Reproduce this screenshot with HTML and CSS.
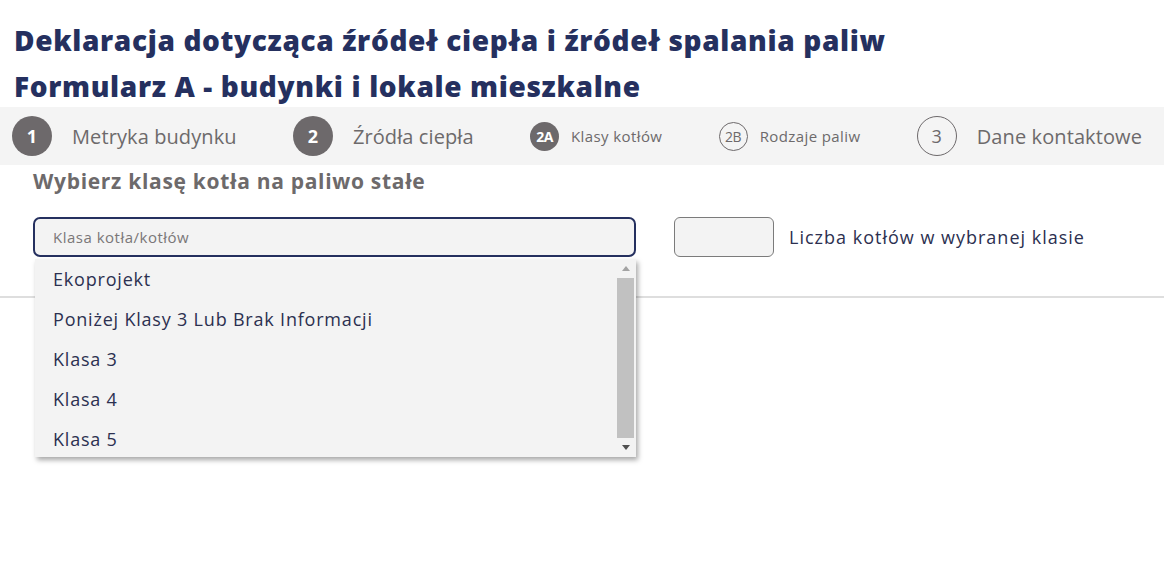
FILE: index.html
```html
<!DOCTYPE html>
<html lang="pl">
<head>
<meta charset="utf-8">
<title>Deklaracja</title>
<link rel="stylesheet" href="styles.css">
</head>
<body>
<header class="head">
  <h1 class="title">Deklaracja dotycząca źródeł ciepła i źródeł spalania paliw</h1>
  <h2 class="title">Formularz A - budynki i lokale mieszkalne</h2>
</header>
<nav class="steps">
  <div class="step big"><span class="num filled">1</span><span class="label">Metryka budynku</span></div>
  <div class="step big"><span class="num filled">2</span><span class="label">Źródła ciepła</span></div>
  <div class="step small"><span class="num filled">2A</span><span class="label">Klasy kotłów</span></div>
  <div class="step small"><span class="num outline">2B</span><span class="label">Rodzaje paliw</span></div>
  <div class="step big"><span class="num outline">3</span><span class="label">Dane kontaktowe</span></div>
</nav>
<main class="form">
  <h3 class="section-title">Wybierz klasę kotła na paliwo stałe</h3>
  <div class="row">
    <div class="select-wrap">
      <div class="select">Klasa kotła/kotłów</div>
      <div class="dropdown">
        <ul class="options">
          <li>Ekoprojekt</li>
          <li>Poniżej Klasy 3 Lub Brak Informacji</li>
          <li>Klasa 3</li>
          <li>Klasa 4</li>
          <li>Klasa 5</li>
        </ul>
        <div class="scrollbar">
          <span class="arrow up"></span>
          <span class="thumb"></span>
          <span class="arrow down"></span>
        </div>
      </div>
    </div>
    <div class="count"></div>
    <label class="count-label">Liczba kotłów w wybranej klasie</label>
  </div>
  <hr class="divider">
</main>
</body>
</html>
```

FILE: styles.css
```css
* { box-sizing: border-box; }
html, body { margin: 0; padding: 0; background: #fff; }
body { font-family: "Open Sans", Lato, sans-serif; color: #25305f; min-height: 580px; }

.head { padding: 20px 0 0 14px; height: 107px; }
.title { margin: 0; font-size: 28px; font-weight: 800; color: #25305f; line-height: 40px; letter-spacing: 0.65px; }
.title + .title { margin-top: 6px; }

.steps {
  background: #f4f4f4;
  height: 58px;
  display: flex;
  align-items: center;
  justify-content: space-between;
  padding: 0 22px 0 12px;
  color: #6d6a6b;
}
.step { display: flex; align-items: center; }
.num { display: flex; align-items: center; justify-content: center; border-radius: 50%; flex: none; }
.num.filled { background: #6d696b; color: #fff; font-weight: 700; }
.num.outline { border: 1.5px solid #6d696b; color: #6d696b; }
.big .num { width: 40px; height: 40px; font-size: 18px; }
.big .label { margin-left: 20px; font-size: 20px; letter-spacing: 0.1px; }
.small .num { width: 29px; height: 29px; font-size: 14px; letter-spacing: -0.5px; }
.small .label { margin-left: 12px; font-size: 15px; letter-spacing: 0.4px; }

.form { padding: 0 0 0 33px; }
.section-title { margin: 0; padding-top: 3px; font-size: 21px; font-weight: 700; color: #6d6a6b; line-height: 26px; letter-spacing: 0.7px; }

.row { display: flex; align-items: center; margin-top: 23px; }
.select-wrap { position: relative; width: 603px; }
.select {
  height: 40px;
  border: 2px solid #25305f;
  border-radius: 7px;
  background: #f3f3f3;
  padding-left: 18px;
  display: flex;
  align-items: center;
  font-size: 15px;
  letter-spacing: 0.5px;
  color: #7a7778;
}
.dropdown {
  position: absolute;
  left: 2px;
  top: 42px;
  width: 601px;
  height: 198px;
  background: #f3f3f3;
  box-shadow: 2px 3px 5px rgba(0,0,0,0.35);
  display: flex;
  z-index: 2;
}
.options { list-style: none; margin: 0; padding: 0; flex: 1; }
.options li { height: 40px; line-height: 40px; padding-left: 18px; font-size: 18px; letter-spacing: 0.8px; color: #2c3050; }
.scrollbar { width: 17px; margin-right: 2px; display: flex; flex-direction: column; align-items: center; }
.arrow { width: 0; height: 0; border-left: 4px solid transparent; border-right: 4px solid transparent; margin: 7px 0; }
.arrow.up { border-bottom: 5px solid #a3a3a3; }
.arrow.down { border-top: 5px solid #505050; }
.thumb { width: 17px; flex: 1; background: #c1c1c1; }

.count {
  width: 100px; height: 40px;
  margin-left: 38px;
  border: 1px solid #7b7b7b;
  border-radius: 6px;
  background: #f3f3f3;
}
.count-label { margin-left: 15px; font-size: 18px; color: #2c3050; letter-spacing: 1px; }

.divider { border: 0; border-top: 2px solid #dedede; margin: 39px 0 0 -33px; }
```
